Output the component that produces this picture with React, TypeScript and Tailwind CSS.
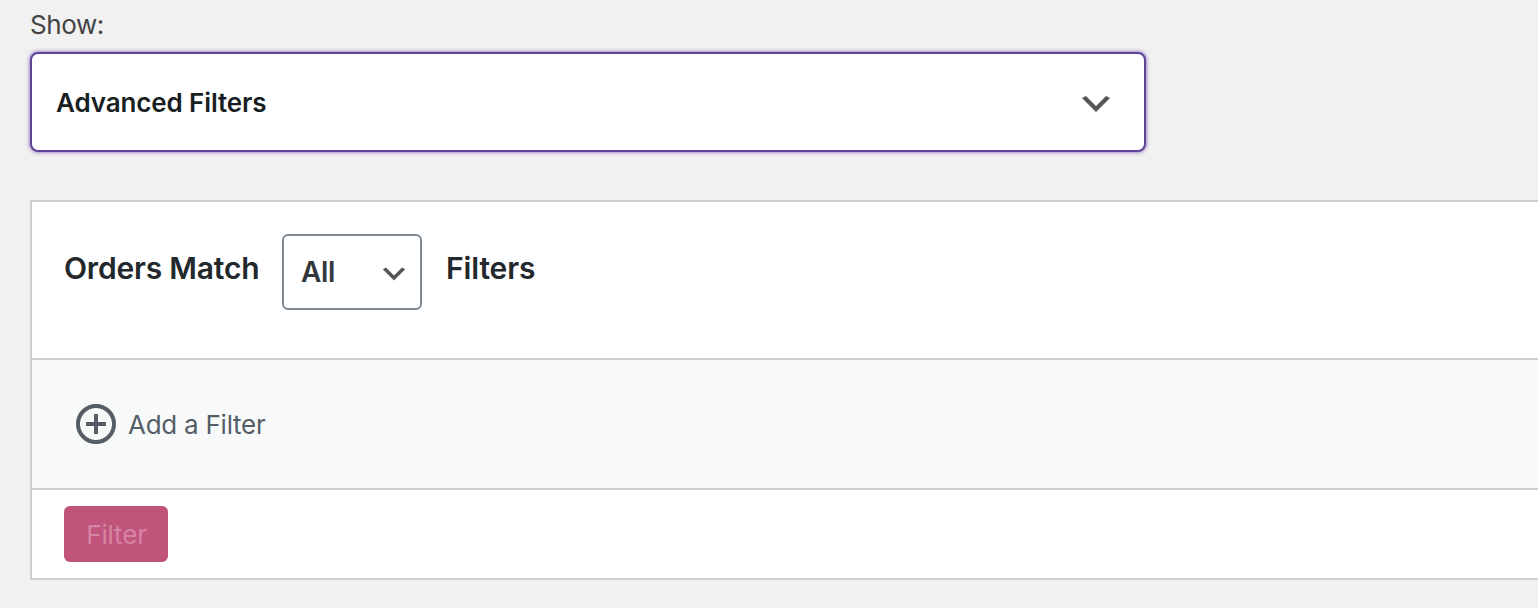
function Chevron({ className }: { className: string }) {
  return (
    <svg viewBox="0 0 20 20" fill="#555" className={className}>
      <path d="M5 6l5 5 5-5 2 1-7 7-7-7 2-1z" />
    </svg>
  );
}

export default function App() {
  return (
    <main className="h-[608px] overflow-hidden bg-[#f1f1f1] pl-[30px] pt-[6px] font-['Inter',sans-serif]">
      <label className="block h-[46px] text-[26px] leading-[38px] tracking-[-0.4px] text-[#444]">Show:</label>
      <button className="flex h-[100px] w-[1116px] items-center justify-between rounded-[8px] border-2 border-[#5f4396] bg-white pl-6 pr-7 text-[#191e23] shadow-[0_0_4px_#7f54b3]">
        <span className="text-[26px] font-semibold tracking-[-0.12px]">Advanced Filters</span>
        <Chevron className="mt-1 size-10" />
      </button>
      <section className="mt-12 border-2 border-r-0 border-[#ccd0d4] bg-white">
        <header className="flex h-[156px] items-start pl-8 pt-8 text-[#23282d]">
          <span className="w-[218px] text-[30px] font-semibold leading-[68px] tracking-[-0.2px]">Orders Match</span>
          <button className="flex h-[76px] w-[140px] items-center justify-between rounded-[6px] border-2 border-[#7e8993] pl-[17px] pr-[10px] text-[28px] font-semibold tracking-[-0.3px] text-[#32373c]">
            All
            <Chevron className="mt-1 size-8" />
          </button>
          <span className="ml-6 text-[30px] font-semibold leading-[68px] tracking-[-0.12px]">Filters</span>
        </header>
        <div className="flex h-[130px] items-center border-t-2 border-[#ccd0d4] bg-[#f8faf9] pl-11 text-[#555d66]">
          <svg width="40" height="40" viewBox="0 0 40 40" fill="none" stroke="currentColor" strokeWidth="4">
            <circle cx="20" cy="20" r="18" />
            <path d="M20 10V30M10 20H30" />
          </svg>
          <span className="ml-3 text-[26px] tracking-[-0.25px]">Add a Filter</span>
        </div>
        <footer className="flex h-[90px] items-center border-t-2 border-[#ccd0d4] pl-8">
          <button className="h-14 w-[104px] rounded-[6px] bg-[#c0547b] pl-px text-[26px] tracking-[-0.15px] text-[#d684a4]">Filter</button>
        </footer>
      </section>
    </main>
  );
}
